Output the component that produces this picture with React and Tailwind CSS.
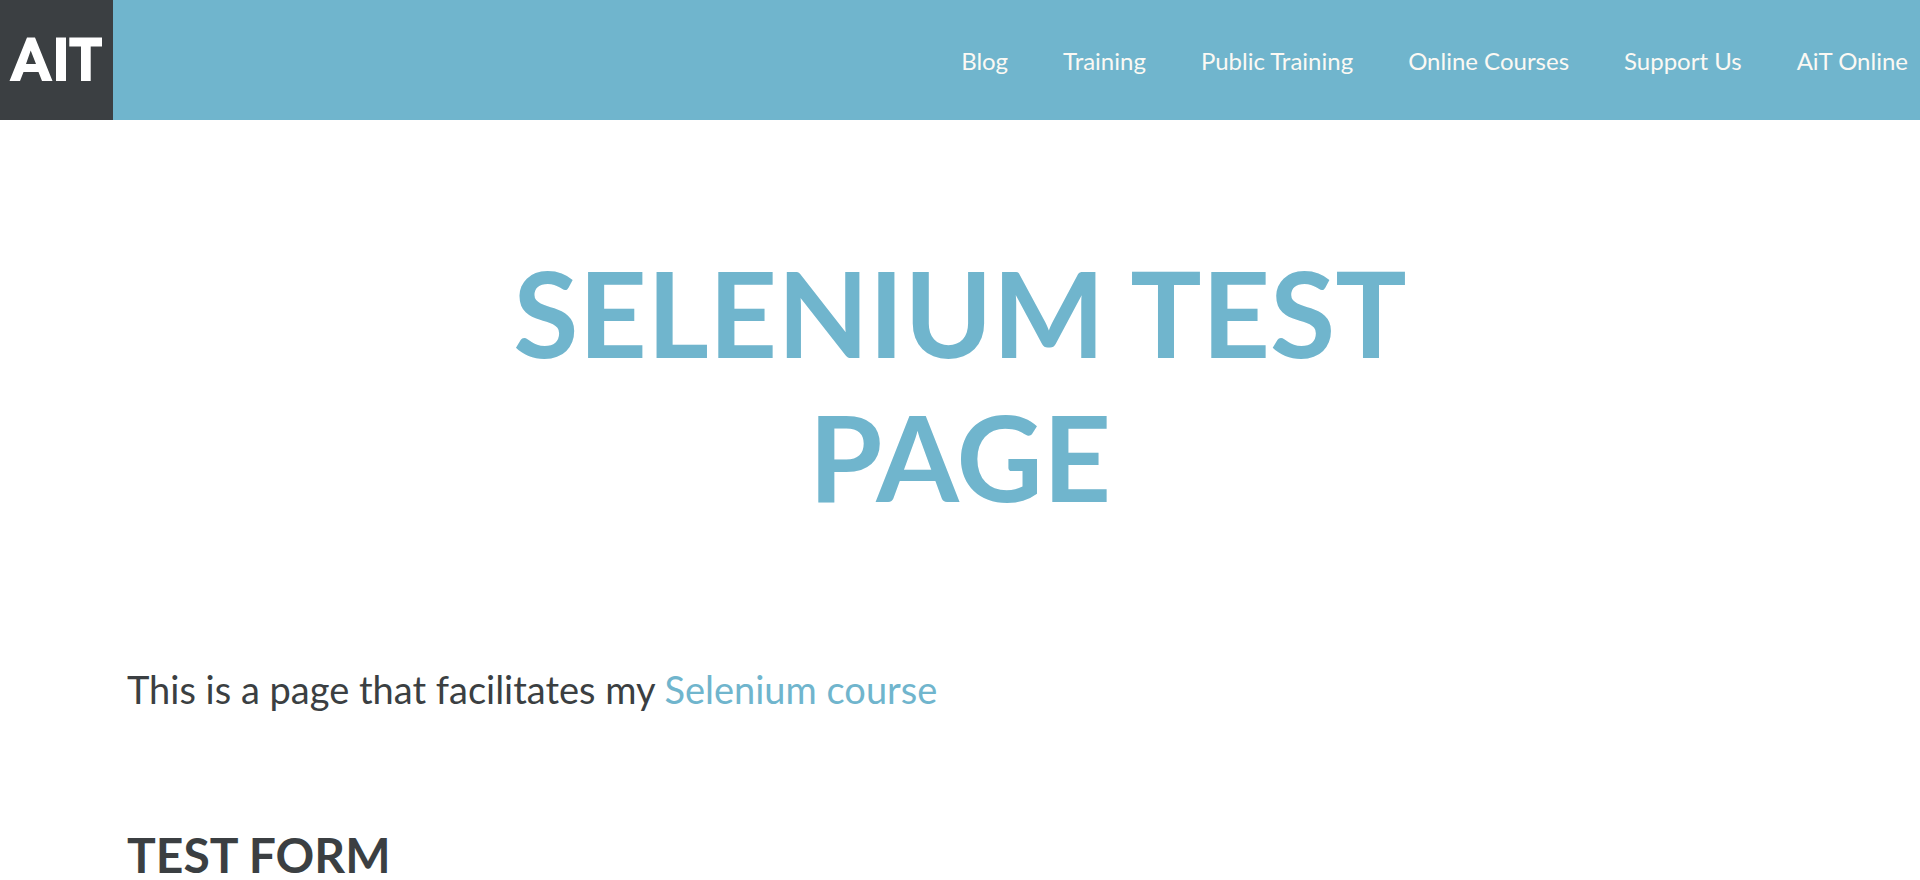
const links = ["Blog", "Training", "Public Training", "Online Courses", "Support Us", "AiT Online"];

export default function App() {
  return (
    <div className="min-h-screen bg-white font-['Lato',sans-serif] text-[#3b3f42]">
      <header className="flex h-[120px] items-center justify-between bg-[#70b5cd]">
        <a href="#" aria-label="AIT home" className="flex h-full w-[113px] items-center justify-center bg-[#3b3f42]">
          <svg viewBox="0 0 113 120" className="h-full w-full" fill="#ffffff" aria-hidden="true">
            <path fillRule="evenodd" d="M9.5 81 L27 37.5 H35 L52.5 81 H42 L38.5 72 H23.5 L20 81 Z M26 64 H36 L30.7 50.5 Z" />
            <path d="M56 37.5 H66 V81 H56 Z" />
            <path d="M69.3 37.5 H102 V46.5 H90.7 V81 H81 V46.5 H69.3 Z" />
          </svg>
        </a>
        <nav className="flex gap-[55px] pt-0.5 pr-3 text-2xl text-[#fbf9f4]">
          {links.map((t) => (
            <a key={t} href="#">{t}</a>
          ))}
        </nav>
      </header>
      <main className="px-[127px]">
        <h1 className="mx-auto max-w-[1000px] pt-[120px] text-center text-[119px] leading-[144px] font-bold text-[#70b5cd]">
          SELENIUM TEST PAGE
        </h1>
        <p className="pt-[131px] text-[38px] leading-[60px]">
          This is a page that facilitates my <a href="#" className="text-[#70b5cd]">Selenium course</a>
        </p>
        <h2 className="pt-[106px] text-5xl leading-[60px] font-bold">TEST FORM</h2>
      </main>
    </div>
  );
}
